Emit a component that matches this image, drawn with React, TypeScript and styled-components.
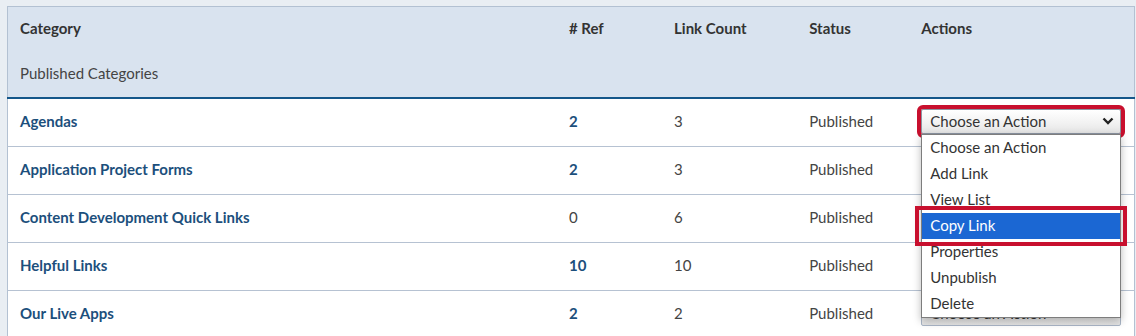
import styled, { createGlobalStyle } from "styled-components";

const GlobalStyle = createGlobalStyle`
    body {
        margin: 0;
        background: #e9eef3;
        font-family: Lato, "Open Sans", sans-serif;
        font-size: 15px;
        color: #333;
    }
`

const Page = styled.main`
    padding: 6px 1px 0 7px;
`

const Table = styled.table`
    width: 1128px;
    border-collapse: collapse;
    border: 1px solid #b3c1d2;
    background: #fff;
    table-layout: fixed;
`

const Head = styled.thead`
    background: #d9e3ef;
    border-bottom: 2px solid #14578a;
`

const HeadCell = styled.th`
    text-align: left;
    font-weight: 700;
    color: #333;
    padding: 0 12px 2px;
    height: 42px;
    vertical-align: middle;
`

const SubHeadCell = styled.th`
    text-align: left;
    font-weight: 400;
    color: #444;
    padding: 0 12px 2px;
    height: 44px;
`

const Row = styled.tr`
    border-bottom: 1px solid #b6c2d2;
`

const Cell = styled.td<{ $strong?: boolean }>`
    height: 44px;
    padding: 0 12px 3px;
    vertical-align: middle;
    color: ${(p) => (p.$strong ? "#1c4f7c" : "#444")};
    font-weight: ${(p) => (p.$strong ? 700 : 400)};
`

const ActionCell = styled.td`
    padding: 0 12px 2px;
    vertical-align: middle;
    position: relative;
`

const SelectWrap = styled.div`
    position: relative;
    width: 200px;
`

const FakeSelect = styled.div<{ $active?: boolean }>`
    box-sizing: border-box;
    height: 25px;
    width: 200px;
    display: flex;
    align-items: center;
    justify-content: space-between;
    padding: 0 6px 1px 8px;
    border: 1px solid ${(p) => (p.$active ? "#8c96a3" : "#aab6c7")};
    border-radius: 2px;
    background: linear-gradient(#ffffff, #f1f1f1 60%, #e4e4e4);
    color: #333;
    font-size: 15px;
    outline: ${(p) => (p.$active ? "4px solid #c8102e" : "none")};
`

const Menu = styled.ul`
    position: absolute;
    z-index: 5;
    top: 25px;
    left: 0;
    width: 200px;
    box-sizing: border-box;
    margin: 0;
    padding: 0;
    list-style: none;
    background: #fff;
    border: 1px solid #7d7d7d;
    box-shadow: 0 3px 8px rgba(0, 0, 0, 0.28);
`

const Option = styled.li<{ $selected?: boolean }>`
    position: relative;
    height: 26px;
    line-height: 24px;
    padding: 0 8px;
    font-size: 15px;
    color: ${(p) => (p.$selected ? "#fff" : "#333")};
    background: ${(p) => (p.$selected ? "#1b67d3" : "transparent")};
    outline: ${(p) => (p.$selected ? "4px solid #c8102e" : "none")};
    outline-offset: 3px;
    z-index: ${(p) => (p.$selected ? 2 : 1)};
`

const Chevron = () => (
    <svg width="12" height="8" viewBox="0 0 12 8">
        <path d="M1.5 1.5 L6 6 L10.5 1.5" fill="none" stroke="#222" strokeWidth="2.4" />
    </svg>
)

const rows = [
    { name: "Agendas", ref: "2", count: "3" },
    { name: "Application Project Forms", ref: "2", count: "3" },
    { name: "Content Development Quick Links", ref: "0", count: "6" },
    { name: "Helpful Links", ref: "10", count: "10" },
    { name: "Our Live Apps", ref: "2", count: "2" },
]

const actions = ["Choose an Action", "Add Link", "View List", "Copy Link", "Properties", "Unpublish", "Delete"]

export default function App() {
    return (
        <Page>
            <GlobalStyle />
            <Table>
                <colgroup>
                    <col style={{ width: 549 }} />
                    <col style={{ width: 105 }} />
                    <col style={{ width: 135 }} />
                    <col style={{ width: 112 }} />
                    <col style={{ width: 225 }} />
                </colgroup>
                <Head>
                    <tr>
                        <HeadCell>Category</HeadCell>
                        <HeadCell># Ref</HeadCell>
                        <HeadCell>Link Count</HeadCell>
                        <HeadCell>Status</HeadCell>
                        <HeadCell>Actions</HeadCell>
                    </tr>
                    <tr>
                        <SubHeadCell>Published Categories</SubHeadCell>
                        <SubHeadCell />
                        <SubHeadCell />
                        <SubHeadCell />
                        <SubHeadCell />
                    </tr>
                </Head>
                <tbody>
                    {rows.map((r, i) => (
                        <Row key={r.name}>
                            <Cell $strong>{r.name}</Cell>
                            <Cell $strong={r.ref !== "0"}>{r.ref}</Cell>
                            <Cell>{r.count}</Cell>
                            <Cell>Published</Cell>
                            <ActionCell>
                                <SelectWrap>
                                    <FakeSelect $active={i === 0}>
                                        <span>Choose an Action</span>
                                        <Chevron />
                                    </FakeSelect>
                                    {i === 0 && (
                                        <Menu>
                                            {actions.map((a) => (
                                                <Option key={a} $selected={a === "Copy Link"}>{a}</Option>
                                            ))}
                                        </Menu>
                                    )}
                                </SelectWrap>
                            </ActionCell>
                        </Row>
                    ))}
                </tbody>
            </Table>
        </Page>
    )
}
